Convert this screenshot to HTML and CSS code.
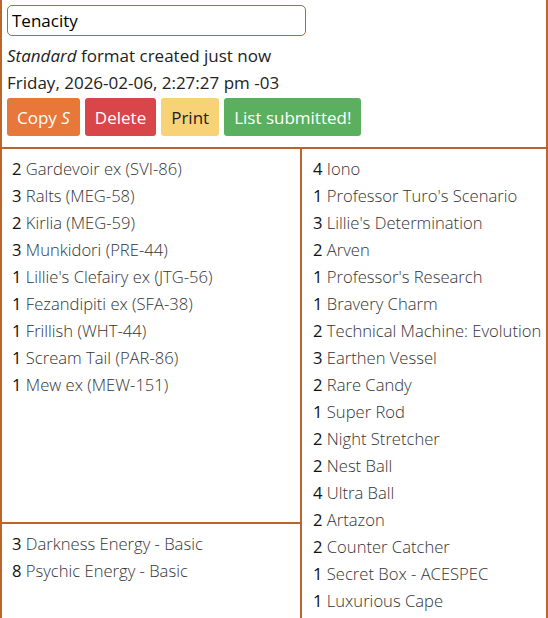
FILE: index.html
```html
<!DOCTYPE html>
<html>
<head>
<meta charset="utf-8">
<link rel="stylesheet" href="styles.css">
</head>
<body>
<div class="page">
  <div class="header">
    <input class="name" type="text" value="Tenacity">
    <div class="info"><em>Standard</em> format created just now</div>
    <div class="info">Friday, 2026-02-06, 2:27:27 pm -03</div>
    <div class="buttons">
      <button class="btn copy">Copy <em>S</em></button>
      <button class="btn delete">Delete</button>
      <button class="btn print">Print</button>
      <button class="btn submitted">List submitted!</button>
    </div>
  </div>
  <div class="columns">
    <div class="left">
      <ul class="list pokemon">
        <li><span class="qty">2</span> Gardevoir ex (SVI-86)</li>
        <li><span class="qty">3</span> Ralts (MEG-58)</li>
        <li><span class="qty">2</span> Kirlia (MEG-59)</li>
        <li><span class="qty">3</span> Munkidori (PRE-44)</li>
        <li><span class="qty">1</span> Lillie's Clefairy ex (JTG-56)</li>
        <li><span class="qty">1</span> Fezandipiti ex (SFA-38)</li>
        <li><span class="qty">1</span> Frillish (WHT-44)</li>
        <li><span class="qty">1</span> Scream Tail (PAR-86)</li>
        <li><span class="qty">1</span> Mew ex (MEW-151)</li>
      </ul>
      <ul class="list energy">
        <li><span class="qty">3</span> Darkness Energy - Basic</li>
        <li><span class="qty">8</span> Psychic Energy - Basic</li>
      </ul>
    </div>
    <div class="right">
      <ul class="list trainers">
        <li><span class="qty">4</span> Iono</li>
        <li><span class="qty">1</span> Professor Turo's Scenario</li>
        <li><span class="qty">3</span> Lillie's Determination</li>
        <li><span class="qty">2</span> Arven</li>
        <li><span class="qty">1</span> Professor's Research</li>
        <li><span class="qty">1</span> Bravery Charm</li>
        <li><span class="qty">2</span> Technical Machine: Evolution</li>
        <li><span class="qty">3</span> Earthen Vessel</li>
        <li><span class="qty">2</span> Rare Candy</li>
        <li><span class="qty">1</span> Super Rod</li>
        <li><span class="qty">2</span> Night Stretcher</li>
        <li><span class="qty">2</span> Nest Ball</li>
        <li><span class="qty">4</span> Ultra Ball</li>
        <li><span class="qty">2</span> Artazon</li>
        <li><span class="qty">2</span> Counter Catcher</li>
        <li><span class="qty">1</span> Secret Box - ACESPEC</li>
        <li><span class="qty">1</span> Luxurious Cape</li>
      </ul>
    </div>
  </div>
</div>
</body>
</html>
```

FILE: styles.css
```css
* { box-sizing: border-box; }

body {
  margin: 0;
  font-family: "Open Sans", "Noto Sans", sans-serif;
  color: #212529;
  background: #fff;
}

.page {
  border-left: 2px solid #b9652b;
  border-right: 2px solid #b9652b;
  min-height: 618px;
}

.header {
  padding: 5px 5px 11px 5px;
  border-bottom: 2px solid #b9652b;
}

.name {
  display: block;
  width: 299px;
  height: 31px;
  margin: 0 0 6px 0;
  padding: 0 4px;
  border: 1px solid #b9652b;
  border-radius: 5px;
  font-family: "Open Sans", sans-serif;
  font-size: 17px;
  color: #000;
  outline: none;
}

.info {
  font-size: 17px;
  line-height: 27px;
  color: #222;
}

.buttons {
  display: flex;
  gap: 5px;
  margin-top: 2px;
}

.btn {
  height: 38px;
  padding: 0 10px;
  border: none;
  border-radius: 3px;
  font-family: "Open Sans", sans-serif;
  font-size: 17px;
  color: #fff;
}

.copy { background: #e8773a; }
.delete { background: #d9464a; }
.print { background: #f7d276; color: #222; }
.submitted { background: #5ab05e; }

.columns {
  display: grid;
  grid-template-columns: 300px 1fr;
}

.left {
  border-right: 2px solid #b9652b;
  display: flex;
  flex-direction: column;
}

.list {
  list-style: none;
  margin: 0;
  padding: 6px 0 6px 10px;
  font-size: 16.6px;
  line-height: 27px;
  font-weight: 300;
  color: #333;
}

.pokemon {
  height: 375px;
  border-bottom: 2px solid #b9652b;
}

.trainers {
  padding-left: 11px;
}

.qty {
  font-weight: 400;
  color: #111;
}
```
